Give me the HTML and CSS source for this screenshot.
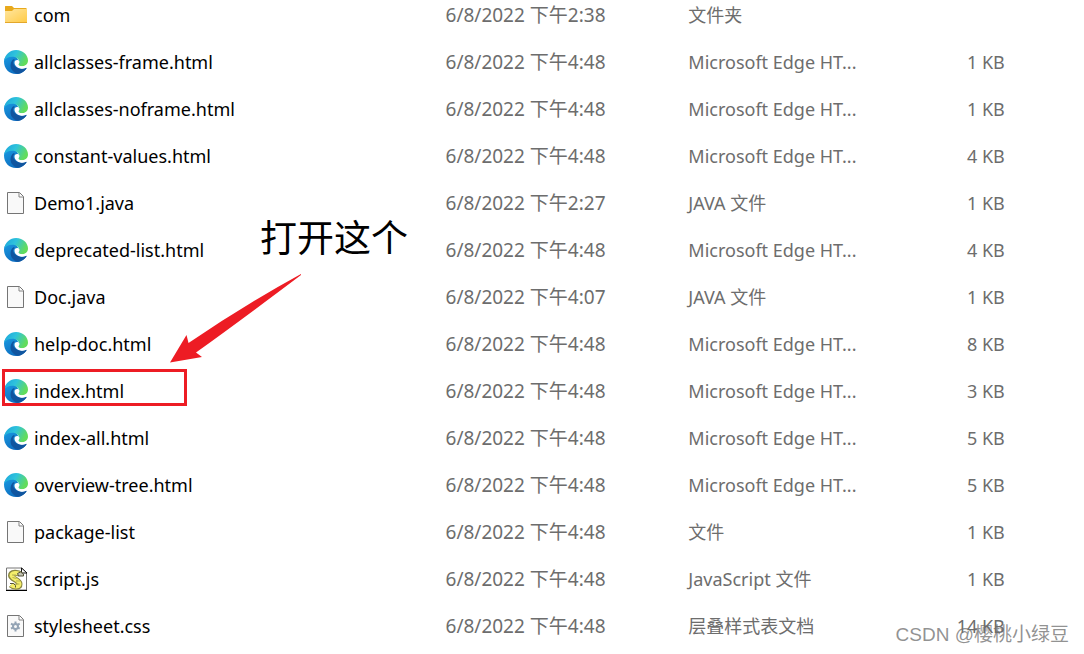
FILE: index.html
```
<!DOCTYPE html>
<html lang="zh-CN">
<head>
<meta charset="utf-8">
<title>文件列表</title>
<link rel="stylesheet" href="styles.css">
</head>
<body>
<svg class="defs" aria-hidden="true">
  <defs>
    <linearGradient id="folder-front" x1="0" y1="0" x2="1" y2="1"><stop offset="0" stop-color="#ffe6a0"/><stop offset="1" stop-color="#ffcb47"/></linearGradient>
    <linearGradient id="edge-top" x1="0" y1="0" x2="1" y2="0.4"><stop offset="0" stop-color="#1aa3dc"/><stop offset="0.5" stop-color="#2fc3dc"/><stop offset="1" stop-color="#62dc5c"/></linearGradient>
    <linearGradient id="edge-left" x1="0" y1="0" x2="0.7" y2="1"><stop offset="0" stop-color="#1a9be2"/><stop offset="1" stop-color="#0b66ba"/></linearGradient>
    <symbol id="folder" viewBox="0 0 24 24">
      <path d="M1 3.5Q1 3 1.500 3H8l2 2h12.500v5H1z" fill="#e8a91c"/>
      <path d="M1 8h7l2-2h12.500Q23 6 23 6.500V19H1z" fill="url(#folder-front)"/>
      <path d="M1 19h22v1H1z" fill="#e3a72b"/>
    </symbol>
    <symbol id="edge" viewBox="0 0 24 24">
      <path d="M0 11.500C0 18.500 5 24 12 24c4.500 0 8.200-2.200 10.400-5.600.3-.5-.1-.9-.7-.6-3 1.400-6 1-8-1l1-6L11 5 3 5.500C1 7 0 9 0 11.500z" fill="url(#edge-left)"/>
      <path d="M.2 10.500C1.200 4.200 6 0 12.100 0 19.200 0 24 5.200 24 10.600c0 3.500-2.500 5.700-5.600 5.700-2.600 0-4.100-.8-4.100-1.600 0-.6 1-.9 1-2.600 0-2.700-2.800-5.300-7-5.300-3.900 0-6.500 1.500-8.100 3.700z" fill="url(#edge-top)"/>
      <path d="M9.500 9.200C6.500 11 5.500 16.400 8 20c1.500 2 3.500 3.300 6 3.800 3.500-.6 6.500-2.600 8.400-5.400.3-.5-.1-.9-.7-.6-3.500 1.700-7.800 1.100-10.400-1.300-2.500-2.300-2.800-4.900-.6-6.800-.4-.4-.8-.5-1.200-.5z" fill="#10559f"/>
      <path d="M15.100 11.100c.6 1.500-.4 2.600-.8 3.300-.3.900 1.500 1.900 4.100 1.900 2 0 3.700-.8 4.700-2.200.5 1.500.1 3-.9 3.700-3.600 1.700-8.100 1-10.200-1.500-1.700-2.100-1.900-4.300-.9-5.500 1.200-1.300 3.300-1.200 4 .3z" fill="#fff"/>
    </symbol>
    <symbol id="file" viewBox="0 0 24 24">
      <path d="M3.500 1.500h12l4 4v17h-16z" fill="#f9f9f9" stroke="#757575"/>
      <path d="M15 2v4h4" fill="#fff" stroke="#858585"/>
    </symbol>
    <symbol id="script" viewBox="0 0 24 24">
      <path d="M2.500 1v22h20V5.500L18 1z" fill="#fff" stroke="#777"/>
      <path d="M2 23.500h21" stroke="#000"/>
      <path d="M17.500 1v5H23z" fill="#fff" stroke="#111"/>
      <path d="M16.500 7.500C14 5 7 5 7 8.500S15.500 13 15.500 17 9 20 7 18" fill="none" stroke="#8a8640" stroke-width="6"/>
      <path d="M16 7.500C14 5 7.500 5.500 7.500 8.500S15.500 13 15.500 17 9 19.500 7 18" fill="none" stroke="#f4ee6a" stroke-width="4"/>
      <path d="M8 8h4M8.500 10.500l4 1M12 14h4M11.500 17h4" stroke="#b5b04e" fill="none"/>
      <path d="M13.500 6.500l3-1.500 3 2v2h-5z" fill="#c4c4b4" stroke="#55533a"/>
      <path d="M6 16.500h3.500l2 2v2" fill="none" stroke="#55533a"/>
    </symbol>
    <symbol id="settings" viewBox="0 0 24 24">
      <use href="#file"/>
      <path d="M10.500 7.500h2v10h-2zM6.500 10.500l1-1.700 8.700 5-1 1.700zM15.200 8.800l1 1.700-8.700 5-1-1.700z" fill="#94a4b5"/>
      <circle cx="11.500" cy="12.500" r="3.500" fill="#94a4b5"/>
      <circle cx="11.500" cy="12.500" r="1.500" fill="#f9f9f9"/>
    </symbol>
  </defs>
</svg>
<main class="explorer">
<table class="files">
  <colgroup><col class="col-name"><col class="col-date"><col class="col-type"><col class="col-size"><col></colgroup>
  <tbody>
    <tr><td class="name"><div class="entry"><svg class="icon"><use href="#folder"/></svg><span>com</span></div></td><td class="date">6/8/2022 下午2:38</td><td>文件夹</td><td class="size"></td><td></td></tr>
    <tr><td class="name"><div class="entry"><svg class="icon"><use href="#edge"/></svg><span>allclasses-frame.html</span></div></td><td class="date">6/8/2022 下午4:48</td><td>Microsoft Edge HT...</td><td class="size">1 KB</td><td></td></tr>
    <tr><td class="name"><div class="entry"><svg class="icon"><use href="#edge"/></svg><span>allclasses-noframe.html</span></div></td><td class="date">6/8/2022 下午4:48</td><td>Microsoft Edge HT...</td><td class="size">1 KB</td><td></td></tr>
    <tr><td class="name"><div class="entry"><svg class="icon"><use href="#edge"/></svg><span>constant-values.html</span></div></td><td class="date">6/8/2022 下午4:48</td><td>Microsoft Edge HT...</td><td class="size">4 KB</td><td></td></tr>
    <tr><td class="name"><div class="entry"><svg class="icon"><use href="#file"/></svg><span>Demo1.java</span></div></td><td class="date">6/8/2022 下午2:27</td><td>JAVA 文件</td><td class="size">1 KB</td><td></td></tr>
    <tr><td class="name"><div class="entry"><svg class="icon"><use href="#edge"/></svg><span>deprecated-list.html</span></div></td><td class="date">6/8/2022 下午4:48</td><td>Microsoft Edge HT...</td><td class="size">4 KB</td><td></td></tr>
    <tr><td class="name"><div class="entry"><svg class="icon"><use href="#file"/></svg><span>Doc.java</span></div></td><td class="date">6/8/2022 下午4:07</td><td>JAVA 文件</td><td class="size">1 KB</td><td></td></tr>
    <tr><td class="name"><div class="entry"><svg class="icon"><use href="#edge"/></svg><span>help-doc.html</span></div></td><td class="date">6/8/2022 下午4:48</td><td>Microsoft Edge HT...</td><td class="size">8 KB</td><td></td></tr>
    <tr><td class="name"><div class="entry"><svg class="icon"><use href="#edge"/></svg><span>index.html</span></div></td><td class="date">6/8/2022 下午4:48</td><td>Microsoft Edge HT...</td><td class="size">3 KB</td><td></td></tr>
    <tr><td class="name"><div class="entry"><svg class="icon"><use href="#edge"/></svg><span>index-all.html</span></div></td><td class="date">6/8/2022 下午4:48</td><td>Microsoft Edge HT...</td><td class="size">5 KB</td><td></td></tr>
    <tr><td class="name"><div class="entry"><svg class="icon"><use href="#edge"/></svg><span>overview-tree.html</span></div></td><td class="date">6/8/2022 下午4:48</td><td>Microsoft Edge HT...</td><td class="size">5 KB</td><td></td></tr>
    <tr><td class="name"><div class="entry"><svg class="icon"><use href="#file"/></svg><span>package-list</span></div></td><td class="date">6/8/2022 下午4:48</td><td>文件</td><td class="size">1 KB</td><td></td></tr>
    <tr><td class="name"><div class="entry"><svg class="icon"><use href="#script"/></svg><span>script.js</span></div></td><td class="date">6/8/2022 下午4:48</td><td>JavaScript 文件</td><td class="size">1 KB</td><td></td></tr>
    <tr><td class="name"><div class="entry"><svg class="icon"><use href="#settings"/></svg><span>stylesheet.css</span></div></td><td class="date">6/8/2022 下午4:48</td><td>层叠样式表文档</td><td class="size">14 KB</td><td></td></tr>
  </tbody>
</table>
<div class="highlight"></div>
<svg class="arrow" viewBox="0 0 134 92" aria-hidden="true"><path d="M131 1Q76 31 18.500 70L16.500 62 0 89.500 32 84 26 79.500Q70 48 131 2z" fill="#ed1c24"/></svg>
<p class="note">打开这个</p>
<p class="watermark">CSDN @樱桃小绿豆</p>
</main>
</body>
</html>
```

FILE: styles.css
```
body {
  margin: 0;
  background: #fff;
  color: #000;
  font-family: "Noto Sans", "Noto Sans CJK SC", sans-serif;
  font-size: 18px;
  line-height: 24px;
}

.defs {
  position: absolute;
  width: 0;
  height: 0;
}

.explorer {
  position: relative;
  overflow: hidden;
}

.files {
  width: 100%;
  margin-top: -9px;
  border-collapse: collapse;
  table-layout: fixed;
  color: #6d6d6d;
}

.col-name { width: 41.1%; }
.col-date { width: 22.4%; }
.col-type { width: 18.6%; }
.col-size { width: 10.6%; }

.files td {
  height: 47px;
  padding: 0;
  white-space: nowrap;
}

.files .name {
  padding-left: 4px;
  color: #000;
}

.files .date {
  font-size: 19px;
}

.files .size {
  text-align: right;
}

.entry {
  display: flex;
  align-items: center;
  gap: 6px;
}

.icon {
  flex: none;
  width: 24px;
  height: 24px;
}

.highlight {
  position: absolute;
  top: 369px;
  left: 2px;
  box-sizing: border-box;
  width: 185px;
  height: 37px;
  border: 3px solid #ed1c24;
}

.arrow {
  position: absolute;
  top: 273px;
  left: 170px;
  width: 134px;
  height: 92px;
}

.note {
  position: absolute;
  top: 212px;
  left: 260px;
  margin: 0;
  font-family: "Noto Sans CJK SC", sans-serif;
  font-size: 37px;
  line-height: 48px;
}

.watermark {
  position: absolute;
  top: 623px;
  right: 15px;
  margin: 0;
  color: rgba(110, 110, 110, 0.75);
  font-family: "Liberation Sans", "Noto Sans CJK SC", sans-serif;
  font-size: 19px;
}
```
